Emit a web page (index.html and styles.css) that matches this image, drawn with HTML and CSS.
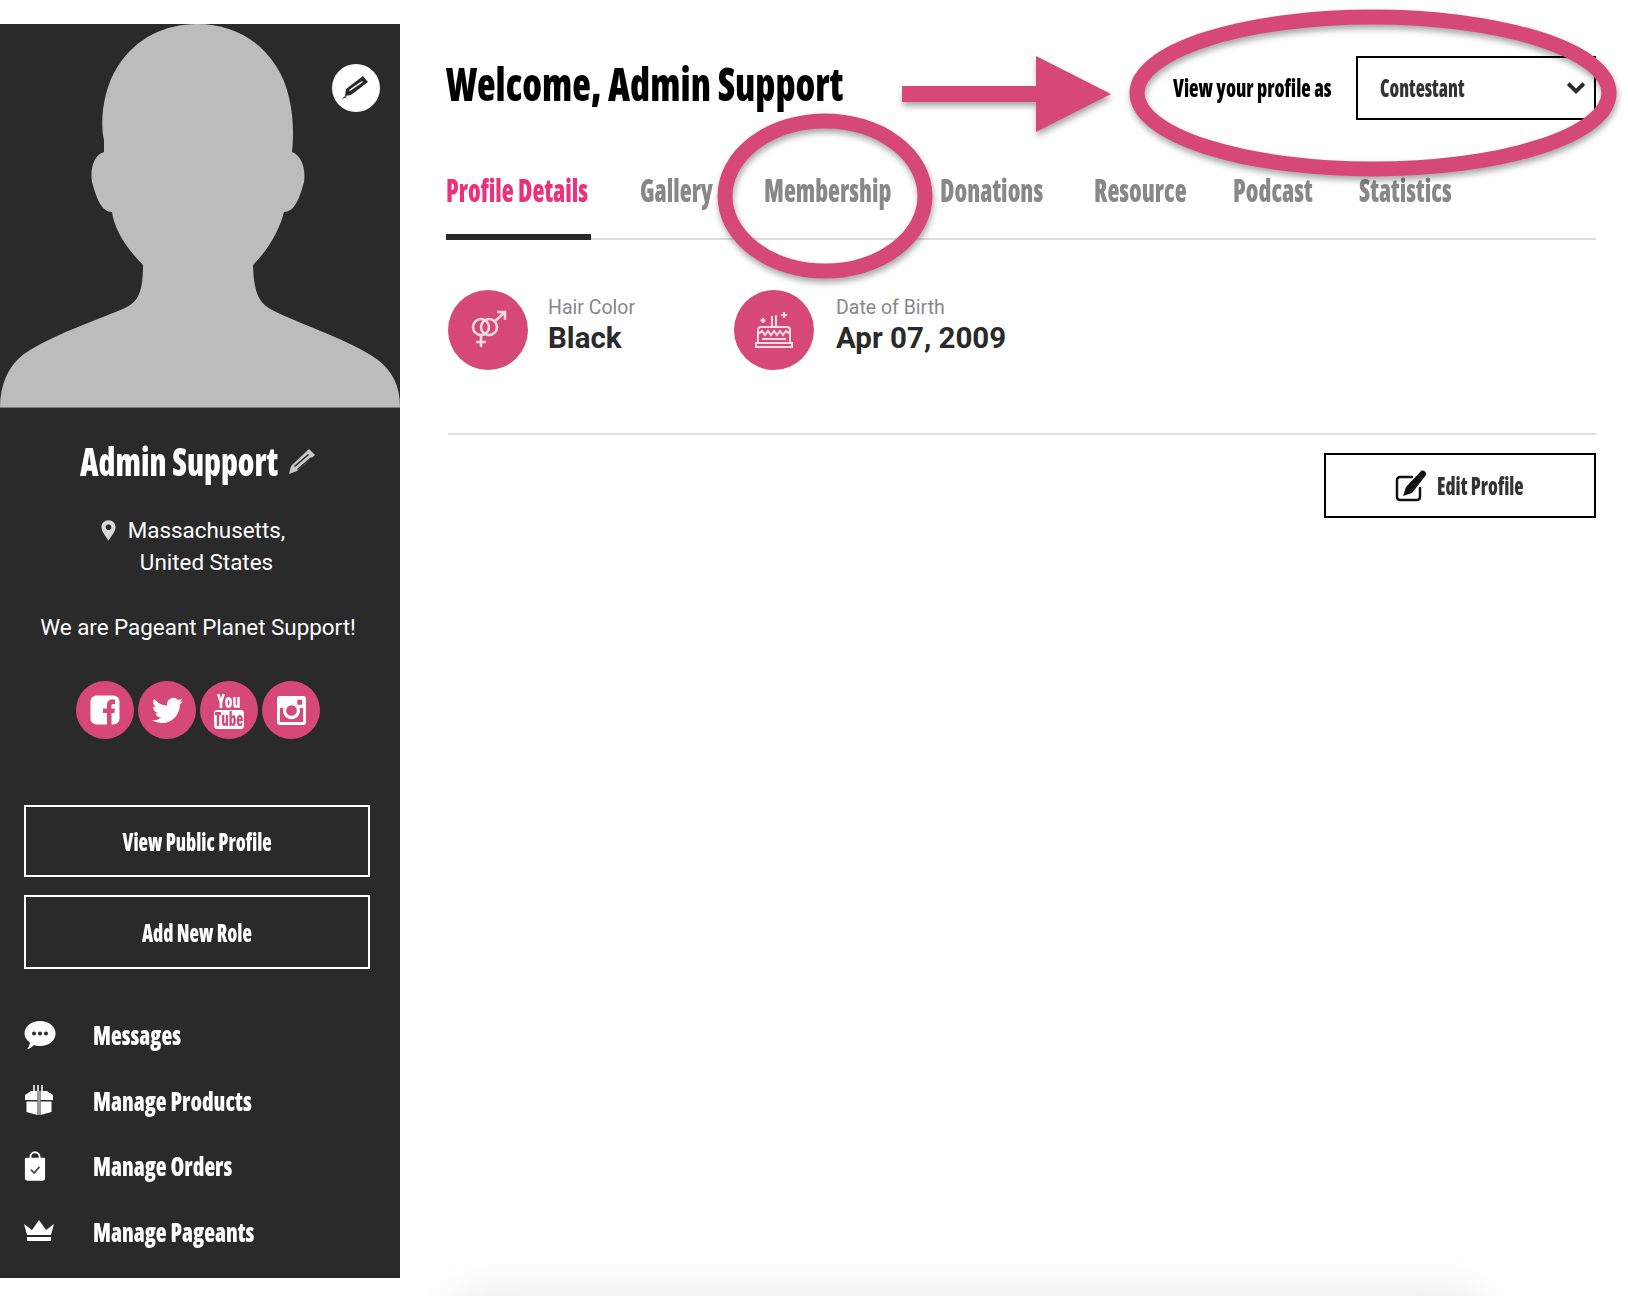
FILE: index.html
```html
<!DOCTYPE html>
<html lang="en">
<head>
  <meta charset="UTF-8" />
  <title>Profile – Admin Support</title>
  <link rel="stylesheet" href="styles.css">
</head>
<body>
  <div class="page">
    <aside class="sidebar">
      <div class="photo">
        <svg class="silhouette" viewBox="0 24 400 383" width="400" height="383">
          <path fill="#bcbcbc" d="M0 407 C0 385 8 366 24 354 C50 336 92 322 125 308 C138 302 143 292 143 265 C125 247 114 228 112 212 C102 212 97 200 92 182 C90 168 94 155 104 152 L104 140 C100 125 102 90 118 66 C136 38 165 24 197 24 C230 24 258 38 276 66 C292 90 295 125 292 152 C301 155 306 168 304 182 C299 200 294 212 284 212 C280 228 270 248 253 265 C254 292 258 302 272 310 C304 326 350 340 378 360 C392 371 400 385 400 407 Z"/>
        </svg>
        <a class="photo-edit" href="#">
          <svg viewBox="0 0 28 28" width="28" height="28"><path fill="#2a2a2a" d="M21 2 L26 8 L9 21 L3 22 L4 15 Z"/><path fill="#fff" d="M7 16 L20 7 L21 8 L8 17 Z"/><path fill="#2a2a2a" d="M3 22 L0 25 L5 23 Z"/></svg>
        </a>
      </div>
      <div class="profile">
        <h2 class="profile-name">
          <span>Admin Support</span>
          <svg viewBox="0 0 28 28" width="28" height="28"><path fill="#c9c9c9" d="M21 2 L27 8 L9 24 L1 27 L3 19 Z"/><path fill="#2a2a2a" d="M6 19 L20 7 L21 8 L7 20 Z M9 22 L23 10 L24 11 L10 23 Z"/></svg>
        </h2>
        <div class="location">
          <svg viewBox="0 0 16 22" width="15" height="21"><path fill="#d8d8d8" fill-rule="evenodd" d="M8 0 C3.500 0 0.500 3.200 0.500 7.500 C0.500 12 5 17 8 22 C11 17 15.500 12 15.500 7.500 C15.500 3.200 12.500 0 8 0 Z M8 4.500 A3 3 0 1 1 8 10.500 A3 3 0 1 1 8 4.500 Z"/></svg>
          <p>Massachusetts,<br>United States</p>
        </div>
        <p class="bio">We are Pageant Planet Support!</p>
        <div class="social">
          <a href="#"><svg viewBox="0 0 30 30" width="30" height="30"><rect width="29" height="29" x="0.500" y="0.500" rx="6" fill="#fff"/><path fill="#d64878" d="M17 30 V18 H13 V13.500 H17 V10 C17 6.500 19 4.500 22.500 4.500 H25 V9 H23 C21.800 9 21.500 9.700 21.500 10.800 V13.500 H25 L24.300 18 H21.500 V30 Z"/></svg></a>
          <a href="#"><svg viewBox="0 0 24 24" width="31" height="31"><path fill="#fff" d="M23.953 4.570a10 10 0 01-2.825.775 4.958 4.958 0 002.163-2.723c-.951.555-2.005.959-3.127 1.184a4.920 4.920 0 00-8.384 4.482C7.690 8.095 4.067 6.130 1.640 3.162a4.822 4.822 0 00-.666 2.475c0 1.710.870 3.213 2.188 4.096a4.904 4.904 0 01-2.228-.616v.060a4.923 4.923 0 003.946 4.827 4.996 4.996 0 01-2.212.085 4.936 4.936 0 004.604 3.417 9.867 9.867 0 01-6.102 2.105c-.390 0-.779-.023-1.170-.067a13.995 13.995 0 007.557 2.209c9.053 0 13.998-7.496 13.998-13.985 0-.210 0-.420-.015-.630A9.935 9.935 0 0024 4.590z"/></svg></a>
          <a href="#" class="youtube">
            <span class="yt-you">You</span>
            <span class="yt-tube">Tube</span>
          </a>
          <a href="#"><svg viewBox="0 0 30 30" width="29" height="29"><path fill="#fff" fill-rule="evenodd" d="M3 0 H27 A3 3 0 0 1 30 3 V27 A3 3 0 0 1 27 30 H3 A3 3 0 0 1 0 27 V3 A3 3 0 0 1 3 0 Z M21 4 V9 H26 V4 Z M3 12.500 V26 A1 1 0 0 0 4 27 H26 A1 1 0 0 0 27 26 V12.500 H23.400 A8.800 8.800 0 1 1 6.600 12.500 Z M15 9.500 A5.500 5.500 0 1 0 15 20.500 A5.500 5.500 0 1 0 15 9.500 Z"/></svg></a>
        </div>
      </div>
      <div class="side-buttons">
        <a class="side-btn" href="#"><span>View Public Profile</span></a>
        <a class="side-btn side-btn-tall" href="#"><span>Add New Role</span></a>
      </div>
      <nav class="side-menu">
        <a href="#">
          <span class="side-icon"><svg viewBox="0 0 32 30" width="32" height="30"><path fill="#fff" d="M16 1 C25 1 31.500 6.500 31.500 13.500 C31.500 20.500 25 26 16 26 C13.500 26 11.500 25.600 10 25 C8 27 5.500 29 3 29 C5 27 6 24.500 5.800 22.500 C2.500 20 0.500 17 0.500 13.500 C0.500 6.500 7 1 16 1 Z"/><circle cx="10" cy="13.500" r="2" fill="#2a2a2a"/><circle cx="16" cy="13.500" r="2" fill="#2a2a2a"/><circle cx="22" cy="13.500" r="2" fill="#2a2a2a"/></svg></span>
          <span class="side-label">Messages</span>
        </a>
        <a href="#">
          <span class="side-icon"><svg viewBox="0 0 30 30" width="30" height="30"><path fill="#fff" d="M1 10 L7 6 H13.500 V15 H1 Z M29 10 L23 6 H16.500 V15 H29 Z M2.500 16.500 H13.500 V30 L2.500 27 Z M27.500 16.500 H16.500 V30 L27.500 27 Z"/><path fill="#cfcfcf" d="M9 0 H11 V6 H9 Z M13 0 H15 V6 H13 Z M17 0 H19 V6 H17 Z"/><rect x="13.500" y="6" width="3" height="24" fill="#9a9a9a"/></svg></span>
          <span class="side-label">Manage Products</span>
        </a>
        <a href="#">
          <span class="side-icon"><svg viewBox="0 0 24 32" width="22" height="30"><path fill="none" stroke="#fff" stroke-width="2" d="M7 9 V6 A5 5 0 0 1 17 6 V9"/><path fill="#fff" d="M2 7 H22 A1 1 0 0 1 23 8 V29 A3 3 0 0 1 20 32 H4 A3 3 0 0 1 1 29 V8 A1 1 0 0 1 2 7 Z"/><path fill="none" stroke="#555" stroke-width="2" d="M7.500 20 L11 23.500 L17 17"/></svg></span>
          <span class="side-label">Manage Orders</span>
        </a>
        <a href="#">
          <span class="side-icon"><svg viewBox="0 0 30 22" width="30" height="22"><path fill="#fff" d="M0 4 L8 10 L15 0 L22 10 L30 4 L27 15 H3 Z M3 17 H27 V21 H3 Z"/></svg></span>
          <span class="side-label">Manage Pageants</span>
        </a>
      </nav>
    </aside>

    <main class="content">
      <div class="topbar">
        <h1 class="welcome">Welcome, Admin Support</h1>
        <div class="view-as">
          <span class="view-as-label">View your profile as</span>
          <div class="view-as-select">
            <span class="view-as-value">Contestant</span>
            <svg viewBox="0 0 18 12" width="20" height="14"><path fill="none" stroke="#2a2a2a" stroke-width="3.500" d="M2 2 L9 9 L16 2"/></svg>
          </div>
        </div>
      </div>

      <nav class="tabs">
        <a class="tab active" href="#"><span>Profile Details</span></a>
        <a class="tab" href="#"><span>Gallery</span></a>
        <a class="tab" href="#"><span>Membership</span></a>
        <a class="tab" href="#"><span>Donations</span></a>
        <a class="tab" href="#"><span>Resource</span></a>
        <a class="tab" href="#"><span>Podcast</span></a>
        <a class="tab" href="#"><span>Statistics</span></a>
      </nav>

      <div class="details">
        <div class="detail detail-hair">
          <span class="detail-icon">
            <svg viewBox="0 0 40 40" width="40" height="40" fill="none" stroke="#f7dbe5" stroke-width="2.500"><circle cx="13" cy="17" r="8"/><circle cx="21" cy="17" r="8"/><path d="M13 25 V37 M8 32 H18 M27 11 L36 3 M29 2 H37 V10"/></svg>
          </span>
          <div class="detail-text">
            <div class="detail-label">Hair Color</div>
            <div class="detail-value">Black</div>
          </div>
        </div>
        <div class="detail">
          <span class="detail-icon">
            <svg viewBox="0 0 40 40" width="40" height="40" fill="none" stroke="#f7dbe5" stroke-width="2"><path d="M4 32 V20 A3 3 0 0 1 7 17 H33 A3 3 0 0 1 36 20 V32"/><path d="M4 24 L8 21 L11 25 L14 21 L17 25 L20 21 L23 25 L26 21 L29 25 L32 21 L36 24"/><path d="M2 33 H38 V37 H2 Z M8 29 H32"/><path d="M9 8 V13 M6.500 10.500 H11.500 M18 6 V16 M22 5 V16 M30 2 V8 M27 5 H33"/></svg>
          </span>
          <div class="detail-text">
            <div class="detail-label">Date of Birth</div>
            <div class="detail-value">Apr 07, 2009</div>
          </div>
        </div>
      </div>

      <div class="actions">
        <a class="edit-btn" href="#">
          <svg viewBox="0 0 32 32" width="32" height="32"><path fill="none" stroke="#111" stroke-width="2.500" stroke-linecap="round" d="M25 18 V27 A3 3 0 0 1 22 30 H5 A3 3 0 0 1 2 27 V10 A3 3 0 0 1 5 7 H17"/><path fill="#111" d="M26 1 C28 -0.500 32 2 31 5 L17 23 L8 26 L11 17 Z"/></svg>
          <span class="edit-label">Edit Profile</span>
        </a>
      </div>
    </main>

    <div class="bottom-shadow"></div>

    <!-- annotations drawn on top of the screenshot -->
    <svg class="marks" viewBox="0 0 1628 1296" width="1628" height="1296">
      <g class="mark-group">
        <ellipse cx="1373" cy="93" rx="236" ry="76"/>
        <ellipse cx="825" cy="196" rx="100" ry="75"/>
        <path class="arrow" d="M902 86 H1036 V56 L1111 94 L1036 132 V102 H902 Z"/>
      </g>
    </svg>
  </div>
</body>
</html>
```
FILE: styles.css
```css
body, html {
  margin: 0;
  padding: 0;
  background-color: #fff;
  color: #111;
  font-family: 'Roboto', sans-serif;
}
a {
  text-decoration: none;
  color: inherit;
}
.profile-name, .youtube, .side-btn, .side-menu a, .welcome, .view-as-label, .view-as-select, .tab, .edit-btn {
  font-family: 'Open Sans', sans-serif;
  font-stretch: 75%;
  font-weight: 800;
  white-space: nowrap;
}
.page {
  display: flex;
  position: relative;
  height: 1296px;
  overflow: hidden;
}
.sidebar {
  flex: 0 0 400px;
  height: 1254px;
  margin-top: 24px;
  background-color: #2a2a2a;
  color: #fff;
}
.photo {
  position: relative;
  height: 383px;
  border-bottom: 1px solid #777;
}
.silhouette {
  display: block;
}
.photo-edit {
  position: absolute;
  top: 40px;
  left: 332px;
  width: 48px;
  height: 48px;
  border-radius: 50%;
  background: #fff;
  display: flex;
  align-items: center;
  justify-content: center;
}
.profile {
  text-align: center;
  padding-right: 4px;
}
.profile-name {
  margin: 32px 0 0;
  display: flex;
  justify-content: center;
  align-items: center;
  gap: 9px;
  font-size: 38px;
  line-height: 42px;
}
.profile-name span {
  width: 199px;
  text-align: left;
  transform: scaleX(0.85);
  transform-origin: left;
}
.location {
  display: flex;
  justify-content: center;
  gap: 12px;
  margin-top: 32px;
  margin-right: 10px;
  font-size: 22.4px;
  line-height: 32px;
}
.location svg {
  margin-top: 6px;
}
.location p {
  margin: 0;
}
.bio {
  margin: 33px 0 0;
  font-size: 22.4px;
  line-height: 32px;
}
.social {
  display: flex;
  justify-content: center;
  gap: 4px;
  margin-top: 38px;
}
.social a {
  width: 58px;
  height: 58px;
  border-radius: 50%;
  background-color: #d64878;
  display: flex;
  flex-direction: column;
  align-items: center;
  justify-content: center;
}
.yt-you {
  font-size: 20px;
  line-height: 18px;
  transform: scaleX(0.75);
}
.yt-tube {
  background: #fff;
  color: #d64878;
  border-radius: 4px;
  padding: 0 1px;
  font-size: 19px;
  line-height: 19px;
  transform: scaleX(0.75);
}
.side-buttons {
  margin: 66px 30px 0 24px;
  display: flex;
  flex-direction: column;
  gap: 18px;
}
.side-btn {
  height: 68px;
  border: 2px solid #fff;
  display: flex;
  align-items: center;
  justify-content: center;
  font-size: 24px;
}
.side-btn-tall {
  height: 70px;
}
.side-btn span {
  transform: scaleX(0.81);
}
.side-menu {
  margin: 33px 0 0 24px;
  display: flex;
  flex-direction: column;
}
.side-menu a {
  height: 65.5px;
  display: flex;
  align-items: center;
  font-size: 27px;
}
.side-icon {
  width: 69px;
  display: flex;
  align-items: center;
}
.side-label {
  transform: scaleX(0.825);
  transform-origin: left;
}
.content {
  flex: 1;
  padding: 56px 32px 0 46px;
  min-width: 0;
}
.topbar {
  display: flex;
  justify-content: space-between;
  align-items: center;
}
.welcome {
  margin: -10px 0 0;
  font-size: 46px;
  color: #000;
  transform: scaleX(0.834);
  transform-origin: left;
}
.view-as {
  display: flex;
  align-items: center;
  gap: 24px;
}
.view-as-label {
  width: 159px;
  margin-top: -2px;
  font-size: 24px;
  color: #000;
  transform: scaleX(0.813);
  transform-origin: left;
}
.view-as-select {
  width: 240px;
  height: 64px;
  box-sizing: border-box;
  border: 2px solid #000;
  padding: 0 8px 0 22px;
  display: flex;
  align-items: center;
  justify-content: space-between;
  font-size: 24px;
  color: #333;
}
.view-as-value {
  margin-top: -2px;
  transform: scaleX(0.78);
  transform-origin: left;
}
.tabs {
  display: grid;
  grid-template-columns: 145px 75px 127px 105px 90px 77px 90px;
  gap: 49px;
  margin-top: 40px;
  border-bottom: 2px solid #ddd;
  height: 80px;
  box-sizing: border-box;
}
.tab {
  height: 80px;
  box-sizing: border-box;
  padding-top: 12px;
  font-size: 32px;
  line-height: 36px;
  color: #888;
}
.tab span {
  display: inline-block;
  transform: scaleX(0.77);
  transform-origin: left;
}
.tab.active {
  color: #ee2f7c;
  border-bottom: 6px solid #2a2a2a;
}
.details {
  display: flex;
  margin: 50px 0 0 2px;
  padding: 0 0 63px;
  border-bottom: 2px solid #ddd;
}
.detail {
  display: flex;
  align-items: center;
  gap: 20px;
}
.detail + .detail {
  gap: 22px;
}
.detail-hair {
  width: 286px;
}
.detail-icon {
  flex: 0 0 80px;
  width: 80px;
  height: 80px;
  border-radius: 50%;
  background-color: #d64878;
  display: flex;
  align-items: center;
  justify-content: center;
}
.detail-text {
  padding-bottom: 8px;
}
.detail-label {
  font-size: 19.5px;
  line-height: 24px;
  color: #888;
}
.detail-value {
  font-size: 29.5px;
  line-height: 36px;
  font-weight: 700;
  color: #2a2a2a;
}
.actions {
  display: flex;
  justify-content: flex-end;
  margin-top: 18px;
}
.edit-btn {
  width: 272px;
  height: 65px;
  box-sizing: border-box;
  border: 2px solid #000;
  display: flex;
  align-items: center;
  justify-content: center;
  gap: 10px;
  font-size: 24px;
  color: #333;
}
.edit-label {
  width: 88px;
  transform: scaleX(0.8);
  transform-origin: left;
}
.bottom-shadow {
  position: absolute;
  left: 470px;
  width: 1000px;
  top: 1310px;
  height: 40px;
  box-shadow: 0 0 50px 10px rgba(0,0,0,0.12);
}
.marks {
  position: absolute;
  top: 0;
  left: 0;
  pointer-events: none;
}
.mark-group {
  fill: none;
  stroke: #d64878;
  stroke-width: 15;
  filter: drop-shadow(1px 4px 3px rgba(0,0,0,0.35));
}
.arrow {
  fill: #d64878;
  stroke: none;
}
```
